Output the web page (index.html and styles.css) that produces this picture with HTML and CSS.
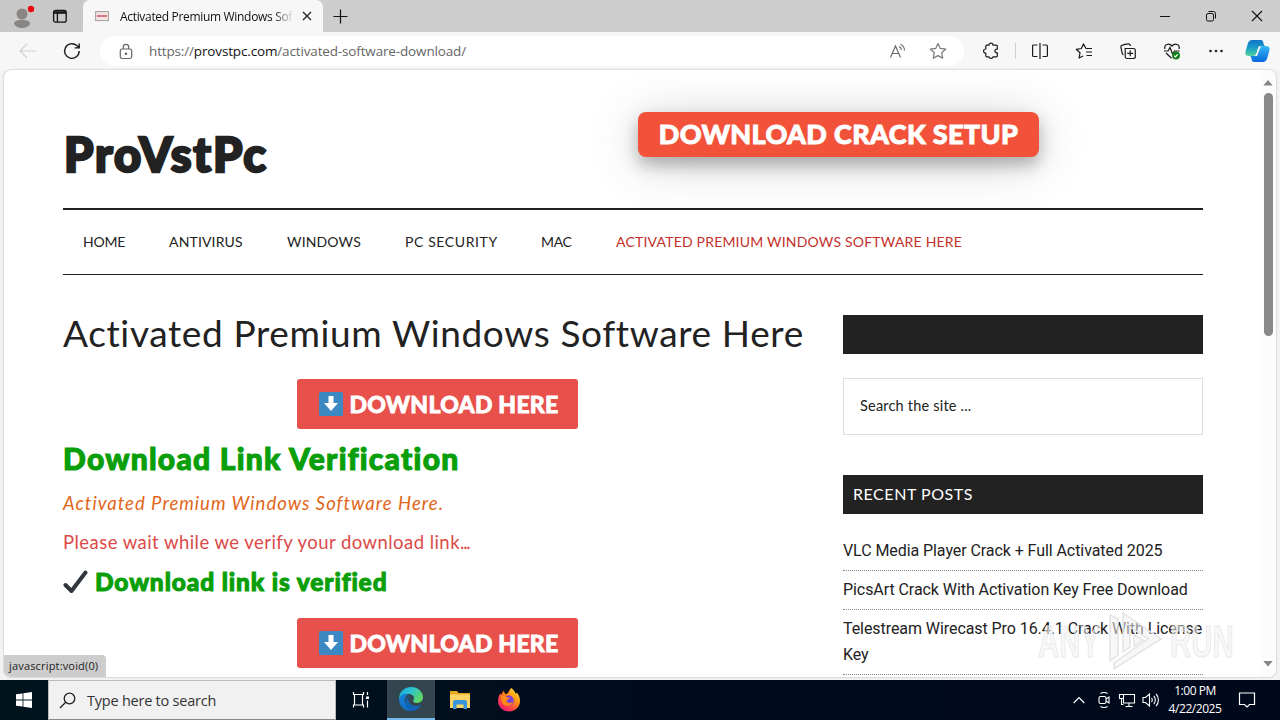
FILE: index.html
```
<!DOCTYPE html>
<html lang="en">
<head>
  <meta charset="UTF-8" />
  <meta name="viewport" content="width=device-width, initial-scale=1.0"/>
  <title>Activated Premium Windows Software Here</title>
  <link rel="stylesheet" href="styles.css">
</head>
<body>

  <!-- Tab strip -->
  <div class="tab-bar">
    <div class="tab-left">
      <svg class="profile" width="32" height="30" viewBox="0 0 32 30"><circle cx="14" cy="13" r="5.5" fill="#888583"/><path d="M6 23c0-3 3-4 8-4s8 1 8 4c-2 3-5 4-8 4s-6-1-8-4z" fill="#888583"/><circle cx="23" cy="8" r="3.2" fill="#e8090c"/></svg>
      <svg class="tab-menu" width="16" height="16" viewBox="0 0 16 16" fill="none" stroke="#111" stroke-width="1.3"><rect x="1.6" y="2.4" width="12.6" height="11.8" rx="2"/><path d="M2 4h12M2 5h12M5.4 5v9"/></svg>
    </div>
    <div class="tab">
      <svg width="14" height="12" viewBox="0 0 14 12"><rect x=".6" y="1.6" width="12.8" height="9" fill="#f5e3e3" stroke="#a39da0"/><path d="M2 6h10" stroke="#cf5561" stroke-width="1.5"/></svg>
      <span class="tab-title">Activated Premium Windows Sof</span>
      <svg width="10" height="10" viewBox="0 0 10 10" stroke="#222" stroke-width="1.3"><path d="M1 1l8 8M9 1L1 9"/></svg>
    </div>
    <svg class="new-tab" width="15" height="15" viewBox="0 0 15 15" stroke="#111" stroke-width="1.2"><path d="M7.5 .5v14M.5 7.5h14"/></svg>
    <div class="window-buttons">
      <svg width="12" height="12" viewBox="0 0 12 12" stroke="#111"><path d="M1 6.5h10"/></svg>
      <svg width="12" height="12" viewBox="0 0 12 12" fill="none" stroke="#111"><rect x="1.5" y="3.5" width="7" height="7.5" rx="1.5"/><path d="M3.5 1.5h4.8a2.2 2.2 0 0 1 2.2 2.2V8.500"/></svg>
      <svg width="12" height="12" viewBox="0 0 12 12" stroke="#111" stroke-width="1.1"><path d="M1 1l10 10M11 1L1 11"/></svg>
    </div>
  </div>

  <!-- Address bar -->
  <div class="toolbar">
    <svg class="back" width="18" height="16" viewBox="0 0 18 16" fill="none" stroke="#cfcfcf" stroke-width="1.2"><path d="M17 8H1.500M8 1L1 8l7 7"/></svg>
    <svg class="reload" width="18" height="18" viewBox="0 0 18 18" fill="none" stroke="#1a1a1a" stroke-width="1.4"><path d="M16.200 9A7.300 7.300 0 1 1 13.800 3.600L16 5.600M16.200 1.500v4.400h-4.600"/></svg>
    <div class="address">
      <svg width="14" height="17" viewBox="0 0 14 17" fill="none" stroke="#666" stroke-width="1.2"><rect x="1.300" y="6" width="11.400" height="9.500" rx="1.800"/><path d="M4.300 6V4a2.700 2.700 0 0 1 5.400 0v2"/><circle cx="7" cy="10.700" r=".7" fill="#666"/></svg>
      <span class="url">https://<b>provstpc.com</b>/activated-software-download/</span>
      <svg class="read-aloud" width="18" height="16" viewBox="0 0 18 16" fill="none" stroke="#666" stroke-width="1.100"><path d="M1.500 14.500L6.500 3l5 11.500M3.200 10.500h6.600M10 3.500c1.600.8 2.300 2 2.400 3.500M11.500 1.200c2.600 1.200 3.900 3.400 4 6.200"/></svg>
      <svg class="star" width="18" height="18" viewBox="0 0 18 18" fill="none" stroke="#777" stroke-width="1.200" stroke-linejoin="round"><path d="M9 1.500l2.300 4.900 5.400.7-4 3.700 1 5.400L9 13.600l-4.700 2.600 1-5.400-4-3.700 5.400-.7z"/></svg>
    </div>
    <div class="tools">
      <svg width="18" height="18" viewBox="0 0 18 18" fill="none" stroke="#1a1a1a" stroke-width="1.200" stroke-linejoin="round"><path d="M7 3.200a2 2 0 0 1 4 0h3.300a1 1 0 0 1 1 1v3c-3.200-.4-3.200 3.800 0 3.600v3a1 1 0 0 1-1 1H11c-.2 2.200-3.800 2.200-4 0H4.800a1 1 0 0 1-1-1V11c-3 .2-3-4 0-4V4.200a1 1 0 0 1 1-1z"/></svg>
      <span class="divider"></span>
      <svg class="split" width="18" height="18" viewBox="0 0 18 18" fill="none" stroke="#1a1a1a" stroke-width="1.200"><path d="M6.500 3H2.600a1 1 0 0 0-1 1v9.500a1 1 0 0 0 1 1h3.900M11.500 3h3.900a1 1 0 0 1 1 1v9.500a1 1 0 0 1-1 1h-3.900M9 1v16"/></svg>
      <svg width="18" height="18" viewBox="0 0 18 18" fill="none" stroke="#1a1a1a" stroke-width="1.200" stroke-linejoin="round"><path d="M17 6.500h-6L8.500 2 6.300 6.500l-5 .8 3.700 3.500-.9 5.200 4-2M11 10h6M11.500 13.500H17"/></svg>
      <svg width="18" height="18" viewBox="0 0 18 18" fill="none" stroke="#1a1a1a" stroke-width="1.200"><path d="M4.300 13C2.800 12 3 10 2.300 7 1.400 3.800 1.500 3.600 4.500 2.800c4-1 6-2 7.200 1.200M6.500 6.500h8a1.800 1.800 0 0 1 1.800 1.800v6.400a1.800 1.800 0 0 1-1.800 1.800h-6.500a1.800 1.800 0 0 1-1.800-1.800V6.500zM11.200 8.300v6M8.200 11.300h6"/></svg>
      <svg width="18" height="18" viewBox="0 0 18 18" fill="none" stroke="#1a1a1a" stroke-width="1.200"><path d="M2 7C.6 2.600 6 .5 9 4c3-3.500 8.400-1.400 7 3M1 9h4l2-3.500L9.500 12l2-3h5M3 11l5.500 5.200"/><circle cx="13" cy="13.500" r="4" fill="#16801c" stroke="none"/><path d="M11.200 13.700l1.200 1.200 2.400-2.600" stroke="#fff"/></svg>
      <svg width="18" height="18" viewBox="0 0 18 18" fill="#222"><circle cx="3.500" cy="9" r="1.300"/><circle cx="9" cy="9" r="1.300"/><circle cx="14.500" cy="9" r="1.300"/></svg>
    </div>
    <svg class="copilot" width="25" height="24" viewBox="0 0 25 24">
      <defs>
        <linearGradient id="cpLeft" x1="0" y1="0" x2="0" y2="1"><stop offset="0" stop-color="#1173c8"/><stop offset=".5" stop-color="#189fc7"/><stop offset="1" stop-color="#54d39a"/></linearGradient>
        <linearGradient id="cpRight" x1="0" y1="0" x2="0" y2="1"><stop offset="0" stop-color="#35b9f4"/><stop offset="1" stop-color="#0868dc"/></linearGradient>
      </defs>
      <path d="M7 1h9c3 0 2 5 4 6h-4c-3 0-3 3-4 6-1 3-2 4-4 4H4c-4 0-4-3-3-6l2-7c1-2 2-3 4-3z" fill="url(#cpLeft)"/>
      <path d="M18 23H9c-3 0-2-5-4-6h4c3 0 3-3 4-6 1-3 2-4 4-4h4c4 0 4 3 3 6l-2 7c-1 2-2 3-4 3z" fill="url(#cpRight)"/>
      <path d="M13 7h3c-3 0-3 3-4 6-1 3-2 4-3 4h3l4-10z" fill="#f7f7f7"/>
    </svg>
  </div>

  <!-- Page -->
  <div class="viewport">
    <div class="site">
      <header class="site-header">
        <a class="site-title">ProVstPc</a>
        <a class="crack-button"><span>DOWNLOAD CRACK SETUP</span></a>
      </header>

      <nav class="menu">
        <a class="m-home">HOME</a>
        <a class="m-antivirus">ANTIVIRUS</a>
        <a class="m-windows">WINDOWS</a>
        <a class="m-security">PC SECURITY</a>
        <a class="m-mac">MAC</a>
        <a class="active">ACTIVATED PREMIUM WINDOWS SOFTWARE HERE</a>
      </nav>

      <div class="columns">
        <main class="content">
          <h1>Activated Premium Windows Software Here</h1>
          <a class="download">
            <svg width="24" height="24" viewBox="0 0 24 24"><rect width="24" height="24" rx="1.500" fill="#3b88c3"/><path d="M9.500 4h5v7H19l-7 8-7-8h4.500z" fill="#fff"/></svg>
            <span>DOWNLOAD HERE</span>
          </a>
          <h2>Download Link Verification</h2>
          <p class="post-name">Activated Premium Windows Software Here.</p>
          <p class="wait">Please wait while we verify your download link<span class="dots">...</span></p>
          <h3>
            <svg width="25" height="24" viewBox="0 0 25 24" fill="none" stroke="#31373d" stroke-width="4" stroke-linecap="round" stroke-linejoin="round"><path d="M2.500 15l6 6L22.500 2.500"/></svg>
            <span>Download link is verified</span>
          </h3>
          <a class="download">
            <svg width="24" height="24" viewBox="0 0 24 24"><rect width="24" height="24" rx="1.500" fill="#3b88c3"/><path d="M9.500 4h5v7H19l-7 8-7-8h4.500z" fill="#fff"/></svg>
            <span>DOWNLOAD HERE</span>
          </a>
        </main>

        <aside class="sidebar">
          <div class="widget-title"></div>
          <div class="search">Search the site ...</div>
          <div class="widget-title recent">RECENT POSTS</div>
          <ul>
            <li>VLC Media Player Crack + Full Activated 2025</li>
            <li>PicsArt Crack With Activation Key Free Download</li>
            <li>Telestream Wirecast Pro 16.4.1 Crack With License Key</li>
          </ul>
        </aside>
      </div>
    </div>

    <div class="scrollbar">
      <svg width="10" height="6" viewBox="0 0 10 6" fill="#858585"><path d="M5 0l4.700 5.500H.3z"/></svg>
      <div class="thumb"></div>
      <svg class="down" width="10" height="6" viewBox="0 0 10 6" fill="#858585"><path d="M5 5.500L.3 0h9.400z"/></svg>
    </div>

    <div class="status">javascript:void(0)</div>
  </div>

  <!-- Taskbar -->
  <div class="taskbar">
    <div class="start">
      <svg width="16" height="16" viewBox="0 0 16 16" fill="#fff"><path d="M0 2.300l6.600-.9v6.200H0zM7.400 1.300L16 0v7.600H7.400zM0 8.400h6.600v6.200L0 13.700zM7.400 8.400H16V16l-8.600-1.200z"/></svg>
    </div>
    <div class="task-search">
      <svg width="17" height="17" viewBox="0 0 17 17" fill="none" stroke="#222" stroke-width="1.300"><circle cx="10.500" cy="6.500" r="5.300"/><path d="M6.700 10.300L1 16"/></svg>
      <span>Type here to search</span>
    </div>
    <div class="task-item">
      <svg width="18" height="18" viewBox="0 0 18 18" fill="none" stroke="#fff" stroke-width="1.200"><path d="M1.500 1v2.500h10V1M1.500 16.500V14h10v2.500M2.500 4v9.500M10.500 4v9.500M15.500 1v3M15.500 9.500v7"/><rect x="14" y="5.500" width="3" height="2.500" fill="#fff" stroke="none"/></svg>
    </div>
    <div class="task-item edge">
      <svg width="26" height="26" viewBox="0 0 26 26">
        <defs>
          <linearGradient id="edgeTop" x1="0" y1="0" x2="1" y2=".5"><stop offset="0" stop-color="#1ba4e4"/><stop offset=".5" stop-color="#2cc5d0"/><stop offset="1" stop-color="#5fd465"/></linearGradient>
          <linearGradient id="edgeBottom" x1="0" y1="0" x2="1" y2="1"><stop offset="0" stop-color="#1884d8"/><stop offset="1" stop-color="#0b62b8"/></linearGradient>
        </defs>
        <path d="M1 13C1 6 6 1 13 1s12 5 12 10c0 4-3 6-6.500 6-3 0-4-1.500-3-3 2-4-2-6-5-6-5 0-9 3-9.500 6z" fill="url(#edgeTop)"/>
        <path d="M1 13c1-4 5-6 9-5-2 2-3 4-3 6 0 5 4 9 9 10.500C8 27 1 21 1 13z" fill="url(#edgeBottom)"/>
        <path d="M11 10c-2 5 1 10 7 10 2 0 4-.6 5.300-1.500C22 22 18 25 14 25c-6-1-9-10-3-15z" fill="#1264b6"/>
      </svg>
    </div>
    <div class="task-item">
      <svg width="22" height="20" viewBox="0 0 22 20"><path d="M1 2.500V1h7l1.500 2H21v15H1z" fill="#e9a820"/><path d="M1 4.500h20V18H1z" fill="#fbd465"/><path d="M4 19v-7.500l1.500-1.500h11l1.500 1.500V19h-3.500v-4.500h-7V19z" fill="#3b94d9"/></svg>
    </div>
    <div class="task-item">
      <svg width="24" height="24" viewBox="0 0 24 24">
        <defs><linearGradient id="fox" x1="1" y1="0" x2=".2" y2="1"><stop offset="0" stop-color="#fff44f"/><stop offset=".4" stop-color="#ff980e"/><stop offset=".75" stop-color="#ff3c4c"/><stop offset="1" stop-color="#e01878"/></linearGradient></defs>
        <path d="M14.500 0c2 2 3.500 3.500 4.300 6l1-1.500C22 7 23 10 23 13c0 6-5 10.500-11 10.500S1 19 1 13c0-3 1-6 2.500-8 0 1 .3 1.500.5 2C5 5 6 3.500 7 2.500c0 1.500.5 2.500 1.500 3.500C12 6 11.500 2 14.500 0z" fill="url(#fox)"/>
        <circle cx="11.800" cy="12.500" r="5" fill="#7a40d8"/>
        <path d="M4 8c3-1 5 0 6 1.500h3c-1 2-3 2-3.500 3.500 1 3 5 2 6.500.5-1 4-7 6-10 2.500C4 14 4 11 4 8z" fill="#ff8a16"/>
      </svg>
    </div>
    <div class="tray">
      <svg class="chevron" width="12" height="8" viewBox="0 0 12 8" fill="none" stroke="#fff" stroke-width="1.200"><path d="M.7 7L6 1.500 11.300 7"/></svg>
      <svg class="meet" width="14" height="18" viewBox="0 0 14 18" fill="none" stroke="#fff" stroke-width="1.100"><rect x="2" y="5.500" width="7" height="7" rx="1.500"/><path d="M9 8l3-2v6l-3-2M3.500 2.500C5 1.200 9 1.200 10.500 2.500M3.500 15.500c1.500 1.300 5.500 1.300 7 0"/></svg>
      <svg class="network" width="18" height="16" viewBox="0 0 18 16" fill="none" stroke="#fff" stroke-width="1.100"><path d="M6 2.500h10.500v8.500h-11V7M11 11v3.500M7.500 14.500h7M1.500 2.500h4v4h-4zM3.500 6.500v6h2"/></svg>
      <svg class="volume" width="18" height="16" viewBox="0 0 18 16" fill="none" stroke="#fff" stroke-width="1.100"><path d="M1 5.500h2.500L7.500 2v12l-4-3.500H1zM9.500 6c1 1 1 3 0 4M11.800 4c2 2 2 6 0 8M14 2c3.200 3 3.200 9 0 12"/></svg>
      <div class="clock"><span>1:00 PM</span><span>4/22/2025</span></div>
      <svg class="notice" width="18" height="18" viewBox="0 0 18 18" fill="none" stroke="#fff" stroke-width="1.200"><path d="M1.500 2h15v11.500h-5L9 16l-2.500-2.500h-5z"/></svg>
    </div>
  </div>

  <!-- Watermark -->
  <div class="watermark">
    <span>ANY</span>
    <svg width="58" height="62" viewBox="0 0 58 62" fill="rgba(240,240,240,.55)" stroke="#e4e4e4" stroke-width="1.500"><path d="M3 4l8 4v36l-8 6zM16 2l38 26L7 58v-6l34-24-18-12v20l-7 5z"/><path d="M27 24l9 5-9 6z"/></svg>
    <span>RUN</span>
  </div>

</body>
</html>
```
FILE: styles.css
```
* {
  box-sizing: border-box;
  margin: 0;
  padding: 0;
}

body {
  width: 1280px;
  height: 720px;
  overflow: hidden;
  position: relative;
  display: flex;
  flex-direction: column;
  background: #f3f3f3;
  font-family: Lato, sans-serif;
  color: #222;
  white-space: nowrap;
}

svg {
  display: block;
  flex-shrink: 0;
}

/* tab strip */
.tab-bar {
  height: 32px;
  flex-shrink: 0;
  display: flex;
  align-items: center;
  background: #cdcdcd;
}

.tab-left {
  width: 83px;
  height: 32px;
  display: flex;
  align-items: center;
  padding-left: 8px;
  background: #c8c8c8;
  border-radius: 0 0 6px 0;
}

.tab-menu {
  margin-left: 12px;
}

.tab {
  width: 240px;
  height: 32px;
  display: flex;
  align-items: center;
  padding: 0 11px 0 12px;
  background: #f7f7f7;
  border-radius: 7px 7px 0 0;
}

.tab-title {
  width: 175px;
  margin: 0 8px 0 11px;
  font: 12px "Open Sans", sans-serif;
  letter-spacing: -0.32px;
  color: #111;
  -webkit-mask-image: linear-gradient(to right, #000 88%, transparent);
  mask-image: linear-gradient(to right, #000 88%, transparent);
}

.new-tab {
  margin-left: 10px;
}

.window-buttons {
  display: flex;
  gap: 34px;
  margin-left: auto;
  padding-right: 17px;
}

/* toolbar */
.toolbar {
  height: 38px;
  flex-shrink: 0;
  display: flex;
  align-items: center;
  background: #f7f7f7;
  padding-left: 19px;
}

.reload {
  margin-left: 26px;
}

.address {
  width: 864px;
  height: 30px;
  display: flex;
  align-items: center;
  margin-left: 19px;
  padding: 0 17px 0 19px;
  background: #fff;
  border-radius: 15px;
}

.url {
  margin-left: 16px;
  font: 13.5px "Open Sans", sans-serif;
  letter-spacing: -0.15px;
  color: #666;
}

.url b {
  font-weight: 400;
  color: #111;
}

.read-aloud {
  margin-left: auto;
}

.star {
  margin-left: 22px;
}

.tools {
  display: flex;
  align-items: center;
  gap: 26px;
  margin-left: 18px;
}

.divider {
  width: 1px;
  height: 16px;
  margin: 0 -11px;
  background: #d0d0d0;
}

.copilot {
  margin-left: 20px;
}

/* page */
.viewport {
  position: relative;
  width: 1272px;
  height: 607px;
  flex-shrink: 0;
  margin: 0 4px;
  overflow: hidden;
  background: #fff;
  border-radius: 7px;
  box-shadow: 0 0 2px rgba(0, 0, 0, 0.35);
}

.site {
  width: 1140px;
  margin-left: 59px;
}

.site-header {
  height: 138px;
  display: flex;
  align-items: flex-start;
}

.site-title {
  width: 575px;
  padding: 55px 0 0 1px;
  font-size: 47px;
  line-height: 58px;
  font-weight: 900;
  letter-spacing: 1.9px;
  -webkit-text-stroke: 2.4px #222;
}

.crack-button {
  width: 401px;
  height: 45px;
  margin-top: 42px;
  text-align: center;
  background: #f2523a;
  border-radius: 8px;
  color: #fff;
  font-size: 27px;
  line-height: 44px;
  font-weight: 900;
  letter-spacing: 0.35px;
  -webkit-text-stroke: 0.9px #fff;
  box-shadow: 0 8px 16px rgba(0, 0, 0, 0.26), 0 6px 50px rgba(0, 0, 0, 0.19);
}

.menu {
  position: relative;
  height: 67px;
  display: flex;
  align-items: center;
  gap: 44px;
  padding: 0 0 2px 20px;
  background: #fff;
  border-top: 2px solid #222;
  border-bottom: 1px solid #222;
  font-size: 14px;
  letter-spacing: 0.15px;
}

.m-home {
  width: 42px;
  letter-spacing: -0.2px;
}

.m-antivirus,
.m-windows {
  width: 74px;
}

.m-security {
  width: 92px;
  letter-spacing: 0.6px;
}

.m-mac {
  width: 31px;
  letter-spacing: -0.3px;
}

.menu .active {
  letter-spacing: 0.2px;
  color: #c4302b;
}

.columns {
  display: flex;
  gap: 32px;
  padding-top: 40px;
}

.content {
  width: 748px;
}

h1 {
  height: 36px;
  margin-bottom: 28px;
  font-size: 37px;
  line-height: 36px;
  font-weight: 400;
  letter-spacing: 0.63px;
}

.download {
  width: 281px;
  height: 50px;
  display: flex;
  align-items: center;
  gap: 7px;
  margin: 0 auto;
  padding-left: 22px;
  background: #e8514b;
  border-radius: 3px;
  color: #fff;
  font-size: 23px;
  font-weight: 900;
  letter-spacing: 0.25px;
  -webkit-text-stroke: 0.8px #fff;
}

h2 {
  margin-top: 9px;
  font-size: 30px;
  line-height: 40px;
  font-weight: 900;
  letter-spacing: 1.25px;
  color: #0a9f0a;
  -webkit-text-stroke: 1.1px #0a9f0a;
}

.post-name,
.wait {
  font-size: 18.5px;
  line-height: 24px;
}

.post-name {
  margin-top: 13px;
  font-style: italic;
  letter-spacing: 1.02px;
  color: #e2661a;
}

.wait {
  margin-top: 15px;
  letter-spacing: 0.45px;
  color: #dc4a48;
}

.wait .dots {
  letter-spacing: -1.2px;
}

h3 {
  display: flex;
  align-items: center;
  gap: 7px;
  margin: 13px 0 21px;
  font-size: 24.5px;
  line-height: 30px;
  font-weight: 900;
  letter-spacing: 0.87px;
  color: #0a9f0a;
  -webkit-text-stroke: 1px #0a9f0a;
}

.sidebar {
  width: 360px;
}

.widget-title {
  height: 39px;
  padding-left: 10px;
  background: #222;
  color: #fff;
  font-size: 16px;
  line-height: 38px;
  letter-spacing: 0.55px;
}

.search {
  height: 57px;
  margin: 24px 0 40px;
  padding-left: 16px;
  border: 1px solid #ddd;
  font-size: 14.5px;
  line-height: 54px;
  letter-spacing: 0.2px;
}

.sidebar ul {
  margin-top: 24px;
  list-style: none;
  font-family: Roboto, sans-serif;
  font-size: 16px;
  line-height: 26px;
  letter-spacing: -0.07px;
}

.sidebar li {
  margin-bottom: 6px;
  padding-bottom: 6px;
  border-bottom: 1px dotted #888;
  white-space: normal;
}

.scrollbar {
  position: absolute;
  top: 0;
  right: 0;
  width: 15px;
  height: 100%;
  padding: 10px 3px 10px 2px;
  display: flex;
  flex-direction: column;
  align-items: center;
  background: #fcfcfc;
}

.thumb {
  width: 9px;
  height: 243px;
  margin-top: 7px;
  background: #888;
  border-radius: 5px;
}

.down {
  margin-top: auto;
}

.status {
  position: absolute;
  left: 0;
  bottom: 0;
  width: 102px;
  height: 22px;
  padding-left: 5px;
  background: #cdcdcd;
  border-radius: 0 4px 0 6px;
  font: 11px/21px "Open Sans", sans-serif;
  letter-spacing: 0.17px;
  color: #222;
}

/* taskbar */
.taskbar {
  height: 40px;
  flex-shrink: 0;
  margin-top: 3px;
  display: flex;
  background: linear-gradient(to right, #00141e, #000c1e 50%, #00091b);
}

.start,
.task-item {
  width: 48px;
  display: flex;
  align-items: center;
  justify-content: center;
}

.task-item {
  width: 49px;
}

.task-search {
  width: 288px;
  display: flex;
  align-items: center;
  gap: 11px;
  padding-left: 10px;
  background: #f1f1f1;
  border: 1px solid #bbb;
  border-bottom-color: #888;
  font: 14.5px "Open Sans", sans-serif;
  letter-spacing: -0.23px;
  color: #333;
}

.task-item.edge {
  width: 48px;
  margin-left: 2px;
  background: #33464f;
  border-bottom: 2px solid #76b9ed;
}

.tray {
  display: flex;
  align-items: center;
  margin-left: auto;
  padding-right: 24px;
}

.meet {
  margin-left: 12px;
}

.network {
  margin-left: 7px;
}

.volume {
  margin-left: 6px;
}

.clock {
  width: 60px;
  display: flex;
  flex-direction: column;
  margin-left: 5px;
  text-align: center;
  font: 12px/18px "Open Sans", sans-serif;
  letter-spacing: -0.45px;
  color: #fff;
}

.notice {
  margin-left: 13px;
}

.watermark {
  position: absolute;
  left: 1038px;
  top: 611px;
  display: flex;
  align-items: center;
  gap: 5px;
  font: 700 44px "Liberation Sans", sans-serif;
  color: rgba(240, 240, 240, 0.55);
  -webkit-text-stroke: 1px rgba(228, 228, 228, 0.8);
}

.watermark span {
  width: 64px;
  transform: scaleX(0.67);
  transform-origin: left;
}
```
